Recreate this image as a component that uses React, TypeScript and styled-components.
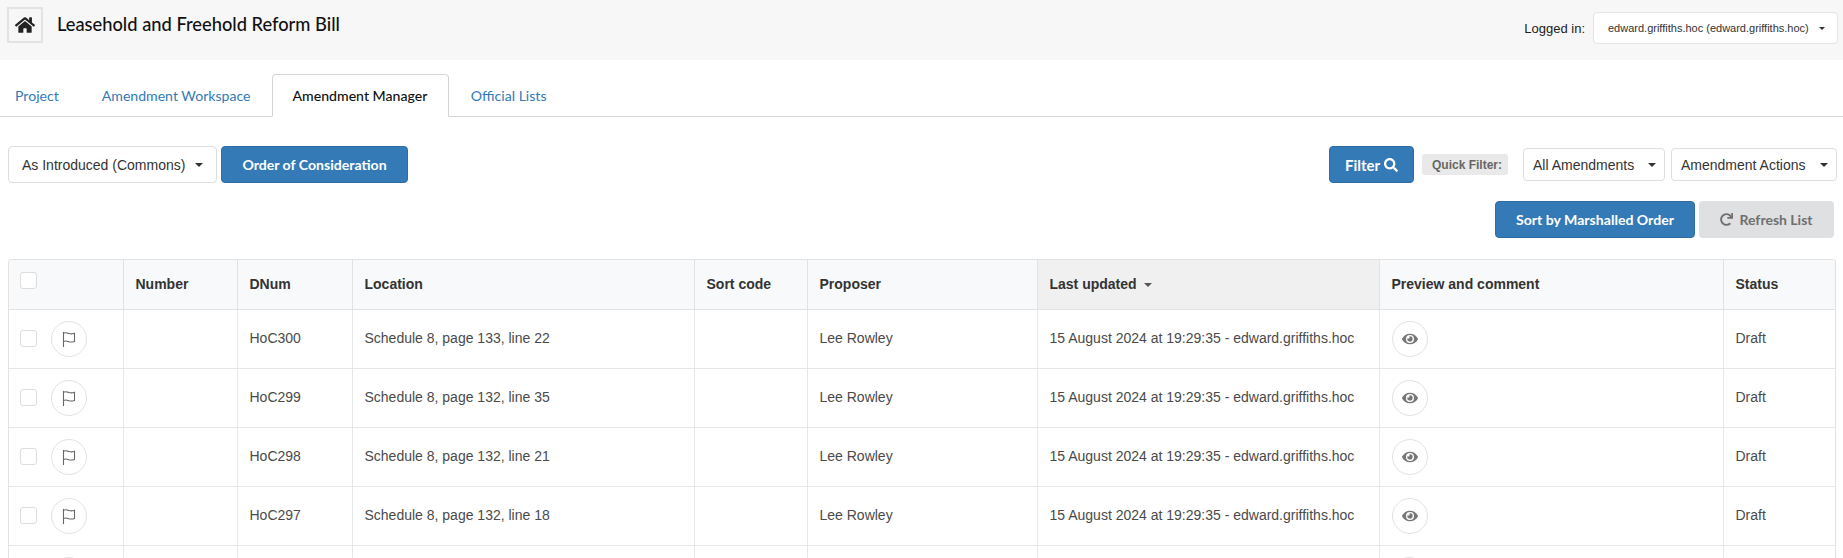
import React from "react";
import styled, { createGlobalStyle } from "styled-components";
import { FaHome, FaSearch, FaEye, FaRedo } from "react-icons/fa";

const GlobalStyle = createGlobalStyle`
  html, body {
    margin: 0;
    height: 100%;
    overflow: hidden;
    background: #fff;
    font-family: "Liberation Sans", Arial, sans-serif;
    color: #333;
  }
  * { box-sizing: border-box; }
`;

const Header = styled.header`
  height: 60px;
  background: #f7f7f7;
  display: flex;
  align-items: flex-start;
  justify-content: space-between;
  padding: 7px 5px 0 7px;
`;

const TitleGroup = styled.div`
  display: flex;
  align-items: center;
  gap: 14px;
`;

const HomeButton = styled.button`
  width: 36px;
  height: 36px;
  padding: 0;
  display: flex;
  align-items: center;
  justify-content: center;
  background: #f7f7f7;
  border: 2px solid #e3e3e3;
  color: #222;
  font-size: 20px;
`;

const Title = styled.h1`
  margin: 0 0 3px;
  font-family: Lato, sans-serif;
  font-size: 18.3px;
  font-weight: 500;
  color: #111;
`;

const LoginGroup = styled.div`
  display: flex;
  align-items: center;
  gap: 8px;
  margin-top: 5px;
`;

const LoginLabel = styled.span`
  font-size: 13px;
  color: #222;
`;

const LoginSelect = styled.div`
  height: 32px;
  width: 245px;
  padding: 0 12px 0 14px;
  display: flex;
  align-items: center;
  justify-content: space-between;
  background: #fff;
  border: 1px solid #e4e4e4;
  border-radius: 4px;
  font-size: 11px;
  color: #333;
`;

const Caret = styled.span<{ $small?: boolean }>`
  display: inline-block;
  width: 0;
  height: 0;
  border-top: ${(p) => (p.$small ? 3 : 4)}px solid #333;
  border-left: ${(p) => (p.$small ? 3 : 4)}px solid transparent;
  border-right: ${(p) => (p.$small ? 3 : 4)}px solid transparent;
`;

const Tabs = styled.nav`
  display: flex;
  height: 57px;
  padding-top: 14px;
  border-bottom: 1px solid #d5d5d5;
`;

const Tab = styled.a<{ $active?: boolean }>`
  display: flex;
  align-items: center;
  height: ${(p) => (p.$active ? "43px" : "42px")};
  padding: ${(p) => (p.$active ? "0 21px 0 19.5px" : "0 20.5px")};
  font-family: Lato, sans-serif;
  font-size: 14.1px;
  font-weight: ${(p) => (p.$active ? 500 : 400)};
  color: ${(p) => (p.$active ? "#111" : "#337ab7")};
  background: #fff;
  border: 1px solid ${(p) => (p.$active ? "#d5d5d5" : "transparent")};
  border-bottom-color: ${(p) => (p.$active ? "#fff" : "transparent")};
  border-radius: 4px 4px 0 0;

  &:first-child {
    padding-left: 14px;
  }
`;

const Toolbar = styled.div`
  display: flex;
  justify-content: space-between;
  align-items: center;
  padding: 29px 6px 0 8px;
`;

const ToolGroup = styled.div<{ $gap: number }>`
  display: flex;
  align-items: center;
  gap: ${(p) => p.$gap}px;
`;

const SelectButton = styled.div<{ $width: number; $height: number; $inset: number }>`
  width: ${(p) => p.$width}px;
  height: ${(p) => p.$height}px;
  padding: 0 ${(p) => p.$inset}px 0 ${(p) => (p.$height > 35 ? 13 : 9)}px;
  display: flex;
  align-items: center;
  justify-content: space-between;
  background: #fff;
  border: 1px solid #ddd;
  border-radius: 4px;
  font-size: 14px;
  color: #333;
`;

const PrimaryButton = styled.button<{ $width: number; $height: number }>`
  width: ${(p) => p.$width}px;
  height: ${(p) => p.$height}px;
  padding: 0;
  display: flex;
  align-items: center;
  justify-content: center;
  gap: 4px;
  background: #337ab7;
  border: 1px solid #2e6da4;
  border-radius: 4px;
  color: #fff;
  font-family: Lato, sans-serif;
  font-size: 14.1px;
  font-weight: 700;
`;

const FilterButton = styled(PrimaryButton)`
  font-size: 15px;
  margin-right: 2px;
`;

const QuickFilter = styled.span`
  height: 21px;
  padding: 0 6px 0 10px;
  margin-right: 9px;
  display: flex;
  align-items: center;
  background: #e9e9e9;
  border-radius: 3px;
  font-size: 12px;
  font-weight: 700;
  color: #666;
`;

const SecondRow = styled.div`
  display: flex;
  justify-content: flex-end;
  gap: 4px;
  padding: 18px 9px 0 0;
`;

const RefreshButton = styled.button`
  width: 135px;
  height: 37px;
  padding: 0;
  display: flex;
  align-items: center;
  justify-content: center;
  gap: 6px;
  background: #dfe0e1;
  border: none;
  border-radius: 4px;
  color: #6f6f6f;
  font-family: Lato, sans-serif;
  font-size: 14px;
  font-weight: 700;
`;

const TableWrap = styled.div`
  margin: 21px 7px 0 8px;
  border: 1px solid #e2e2e2;
  border-bottom: none;
  border-radius: 4px 4px 0 0;
  overflow: hidden;
`;

const Table = styled.table`
  width: 100%;
  table-layout: fixed;
  border-collapse: collapse;
  font-size: 14px;
`;

const HeadCell = styled.th<{ $sorted?: boolean }>`
  height: 49px;
  padding: 0 12px 1px;
  text-align: left;
  font-weight: 700;
  font-size: 14px;
  color: #333;
  background: ${(p) => (p.$sorted ? "#f0f0f0" : "#f8f9fb")};
  border-left: 1px solid #e2e2e2;
  border-bottom: 1px solid #e2e2e2;

  &:first-child {
    padding-left: 11px;
    border-left: none;
  }
`;

const Cell = styled.td`
  height: 59px;
  padding: 0 12px 2px;
  color: #4a4a4a;
  white-space: nowrap;
  border-left: 1px solid #e7e7e7;
  border-bottom: 1px solid #e7e7e7;

  &:first-child {
    border-left: none;
  }
`;

const ActionCell = styled(Cell)`
  padding: 0 12px;

  &:first-child {
    padding-left: 11px;
  }
`;

const SelectWrap = styled.div<{ $head?: boolean }>`
  display: flex;
  align-items: center;
  gap: 14px;
  margin-bottom: ${(p) => (p.$head ? "6px" : "0")};
`;

const Check = styled.span`
  width: 17px;
  height: 17px;
  border: 1px solid #ddd;
  border-radius: 3px;
  background: #fff;
`;

const RoundButton = styled.span`
  width: 36px;
  height: 36px;
  display: flex;
  align-items: center;
  justify-content: center;
  border: 1px solid #e2e2e2;
  border-radius: 50%;
  color: #777;
  font-size: 16px;
`;

const SortCaret = styled(Caret)`
  margin-left: 7px;
  vertical-align: 2px;
  border-top-color: #555;
`;

const FlagIcon = () => (
  <svg width="15" height="16" viewBox="0 0 15 16" fill="none" stroke="#666" strokeWidth="1.1">
    <path d="M1.5 1v15" />
    <path d="M1.5 2.2c2.2-.9 3.6-.3 5.4.3 2 .6 3.6.5 5.6-.2v8.2c-2 .7-3.6.8-5.6.2-1.8-.6-3.2-1.1-5.4-.3" />
  </svg>
);

const columns = [114, 114, 115, 342, 113, 230, 342, 344, 114];

const rows = [
  { dnum: "HoC300", location: "Schedule 8, page 133, line 22" },
  { dnum: "HoC299", location: "Schedule 8, page 132, line 35" },
  { dnum: "HoC298", location: "Schedule 8, page 132, line 21" },
  { dnum: "HoC297", location: "Schedule 8, page 132, line 18" },
];

export default function App() {
  return (
    <>
      <GlobalStyle />
      <Header>
        <TitleGroup>
          <HomeButton aria-label="Home">
            <FaHome />
          </HomeButton>
          <Title>Leasehold and Freehold Reform Bill</Title>
        </TitleGroup>
        <LoginGroup>
          <LoginLabel>Logged in:</LoginLabel>
          <LoginSelect>
            edward.griffiths.hoc (edward.griffiths.hoc)
            <Caret $small />
          </LoginSelect>
        </LoginGroup>
      </Header>

      <Tabs>
        <Tab>Project</Tab>
        <Tab>Amendment Workspace</Tab>
        <Tab $active>Amendment Manager</Tab>
        <Tab>Official Lists</Tab>
      </Tabs>

      <Toolbar>
        <ToolGroup $gap={4}>
          <SelectButton $width={209} $height={37} $inset={13}>
            As Introduced (Commons)
            <Caret />
          </SelectButton>
          <PrimaryButton $width={187} $height={37}>Order of Consideration</PrimaryButton>
        </ToolGroup>
        <ToolGroup $gap={6}>
          <FilterButton $width={85} $height={37}>
            Filter <FaSearch size={14} />
          </FilterButton>
          <QuickFilter>Quick Filter:</QuickFilter>
          <SelectButton $width={142} $height={33} $inset={8}>
            All Amendments
            <Caret />
          </SelectButton>
          <SelectButton $width={166} $height={33} $inset={8}>
            Amendment Actions
            <Caret />
          </SelectButton>
        </ToolGroup>
      </Toolbar>

      <SecondRow>
        <PrimaryButton $width={200} $height={37}>Sort by Marshalled Order</PrimaryButton>
        <RefreshButton>
          <FaRedo size={13} /> Refresh List
        </RefreshButton>
      </SecondRow>

      <TableWrap>
        <Table>
          <colgroup>
            {columns.map((width, i) => (
              <col key={i} style={{ width }} />
            ))}
          </colgroup>
          <thead>
            <tr>
              <HeadCell>
                <SelectWrap $head>
                  <Check />
                </SelectWrap>
              </HeadCell>
              <HeadCell>Number</HeadCell>
              <HeadCell>DNum</HeadCell>
              <HeadCell>Location</HeadCell>
              <HeadCell>Sort code</HeadCell>
              <HeadCell>Proposer</HeadCell>
              <HeadCell $sorted>
                Last updated
                <SortCaret />
              </HeadCell>
              <HeadCell>Preview and comment</HeadCell>
              <HeadCell>Status</HeadCell>
            </tr>
          </thead>
          <tbody>
            {rows.map((row) => (
              <tr key={row.dnum}>
                <ActionCell>
                  <SelectWrap>
                    <Check />
                    <RoundButton>
                      <FlagIcon />
                    </RoundButton>
                  </SelectWrap>
                </ActionCell>
                <Cell />
                <Cell>{row.dnum}</Cell>
                <Cell>{row.location}</Cell>
                <Cell />
                <Cell>Lee Rowley</Cell>
                <Cell>15 August 2024 at 19:29:35 - edward.griffiths.hoc</Cell>
                <ActionCell>
                  <RoundButton>
                    <FaEye />
                  </RoundButton>
                </ActionCell>
                <Cell>Draft</Cell>
              </tr>
            ))}
            {/* only the top of the next row's buttons shows at the fold */}
            <tr>
              <ActionCell>
                <SelectWrap>
                  <Check />
                  <RoundButton>
                    <FlagIcon />
                  </RoundButton>
                </SelectWrap>
              </ActionCell>
              <Cell />
              <Cell />
              <Cell />
              <Cell />
              <Cell />
              <Cell />
              <ActionCell>
                <RoundButton>
                  <FaEye />
                </RoundButton>
              </ActionCell>
              <Cell />
            </tr>
          </tbody>
        </Table>
      </TableWrap>
    </>
  );
}
